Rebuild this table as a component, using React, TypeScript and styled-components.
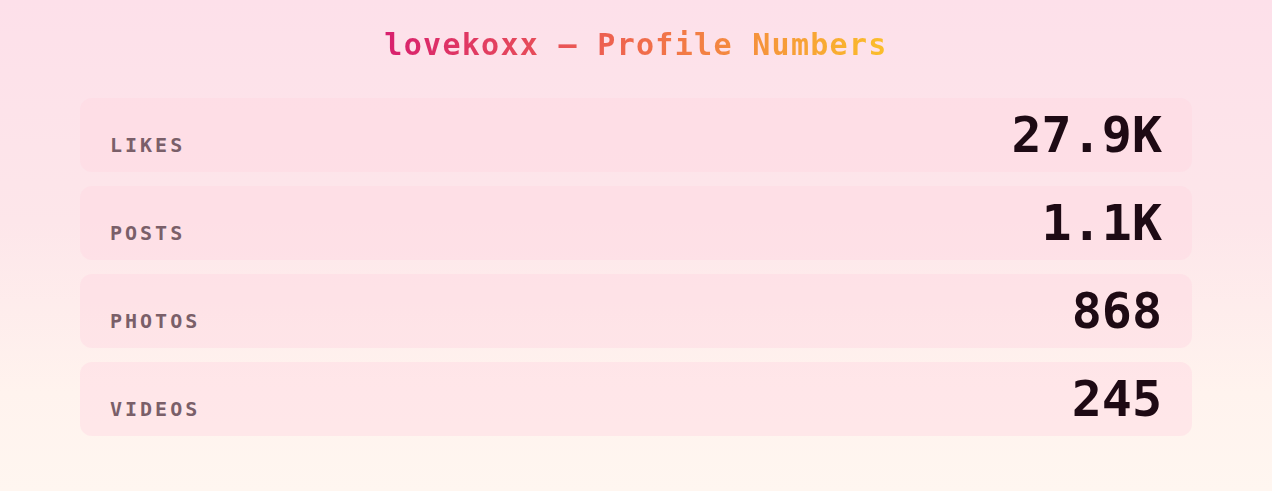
import React from "react";
import styled, { createGlobalStyle } from "styled-components";

const Global = createGlobalStyle`
  html, body { margin: 0; padding: 0; }
  body {
    width: 1272px;
    height: 491px;
    overflow: hidden;
    background: linear-gradient(180deg, #fde0ea 0%, #fde6ea 45%, #fff3ee 80%, #fff6f0 100%);
    font-family: "DejaVu Sans Mono", "Liberation Mono", monospace;
  }
`;

const Page = styled.main`
  display: flex;
  flex-direction: column;
  align-items: stretch;
  padding: 26px 80px 0;
  box-sizing: border-box;
  width: 1272px;
  height: 491px;
`;

const Title = styled.h1`
  margin: 0 auto 34px;
  font-size: 30px;
  font-weight: 700;
  letter-spacing: 1.3px;
  line-height: 38px;
  background: linear-gradient(90deg, #d81f6e 0%, #f06a4c 50%, #fbbf2a 100%);
  -webkit-background-clip: text;
  background-clip: text;
  color: transparent;
`;

const List = styled.div`
  display: flex;
  flex-direction: column;
  gap: 14px;
`;

const Card = styled.div`
  display: flex;
  align-items: baseline;
  justify-content: space-between;
  height: 74px;
  box-sizing: border-box;
  padding: 10px 30px 0;
  border-radius: 12px;
  background: rgba(255, 214, 226, 0.45);
`;

const Label = styled.span`
  font-size: 20px;
  font-weight: 700;
  letter-spacing: 3px;
  color: #7a5f69;
  text-transform: uppercase;
`;

const Value = styled.span`
  font-size: 50px;
  font-weight: 700;
  line-height: 1.1;
  color: #1e0a14;
`;

const stats = [
  { label: "Likes", value: "27.9K" },
  { label: "Posts", value: "1.1K" },
  { label: "Photos", value: "868" },
  { label: "Videos", value: "245" },
];

export default function App() {
  return (
    <>
      <Global />
      <Page>
        <Title>lovekoxx — Profile Numbers</Title>
        <List>
          {stats.map((s) => (
            <Card key={s.label}>
              <Label>{s.label}</Label>
              <Value>{s.value}</Value>
            </Card>
          ))}
        </List>
      </Page>
    </>
  );
}
